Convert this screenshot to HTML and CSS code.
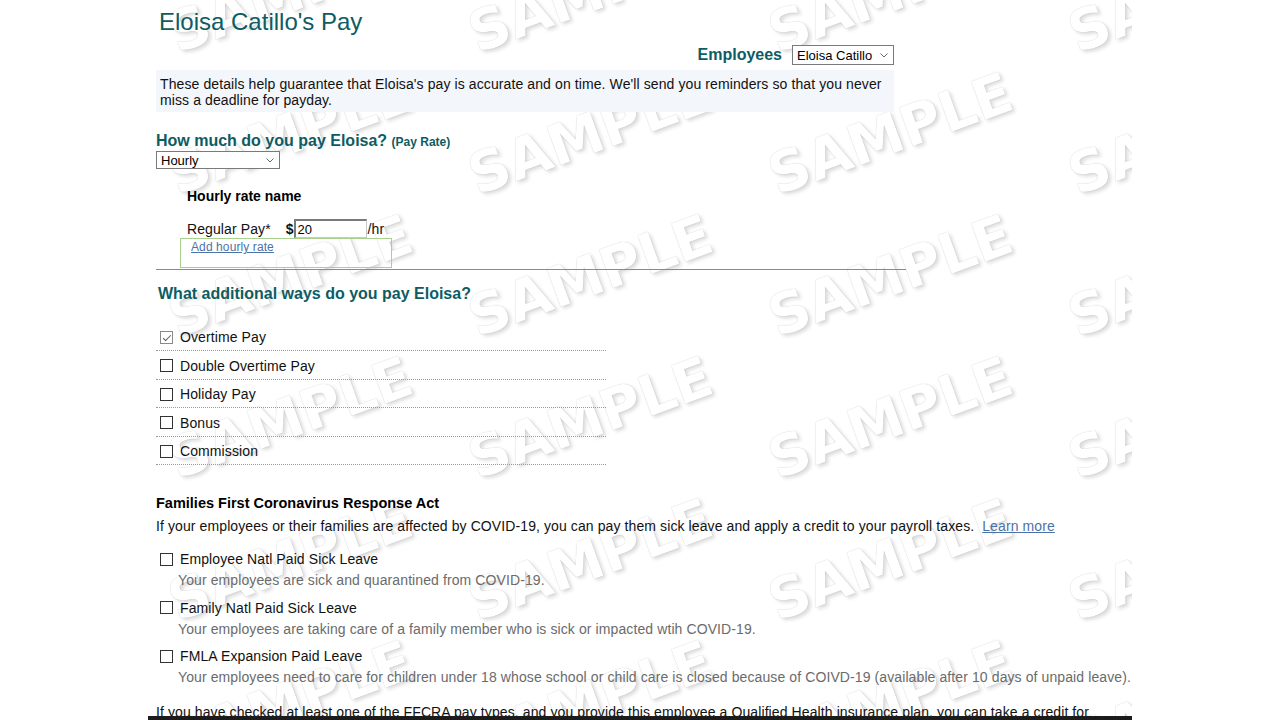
FILE: index.html
```html
<!DOCTYPE html>
<html lang="en">
<head>
    <meta charset="UTF-8">
    <meta name="viewport" content="width=device-width, initial-scale=1.0">
    <title>Eloisa Catillo's Pay</title>
    <link rel="stylesheet" href="styles.css">
</head>
<body>
    <div class="page">
        <!-- sample watermark, sits behind the form -->
        <div class="watermark" aria-hidden="true">
            <span>SAMPLE</span><span>SAMPLE</span><span>SAMPLE</span><span>SAMPLE</span>
            <span>SAMPLE</span><span>SAMPLE</span><span>SAMPLE</span><span>SAMPLE</span>
            <span>SAMPLE</span><span>SAMPLE</span><span>SAMPLE</span><span>SAMPLE</span>
            <span>SAMPLE</span><span>SAMPLE</span><span>SAMPLE</span><span>SAMPLE</span>
            <span>SAMPLE</span><span>SAMPLE</span><span>SAMPLE</span><span>SAMPLE</span>
            <span>SAMPLE</span><span>SAMPLE</span><span>SAMPLE</span><span>SAMPLE</span>
            <span>SAMPLE</span><span>SAMPLE</span><span>SAMPLE</span><span>SAMPLE</span>
        </div>

        <div class="content">
            <h1 class="page-title">Eloisa Catillo's Pay</h1>

            <div class="employee-picker">
                <label for="employee">Employees</label>
                <span class="select-wrap select-employee">
                    <select id="employee">
                        <option>Eloisa Catillo</option>
                    </select>
                    <svg class="chevron" width="8" height="5" viewBox="0 0 8 5"><path d="M0.5 0.5 L4 4 L7.5 0.5" fill="none" stroke="#666" stroke-width="1"/></svg>
                </span>
            </div>

            <p class="intro">These details help guarantee that Eloisa's pay is accurate and on time. We'll send you reminders so that you never miss a deadline for payday.</p>

            <h2 class="section-title">How much do you pay Eloisa? <small>(Pay Rate)</small></h2>
            <span class="select-wrap select-rate">
                <select id="rate-type">
                    <option>Hourly</option>
                    <option>Salary</option>
                </select>
                <svg class="chevron" width="8" height="5" viewBox="0 0 8 5"><path d="M0.5 0.5 L4 4 L7.5 0.5" fill="none" stroke="#666" stroke-width="1"/></svg>
            </span>

            <div class="rate-block">
                <h3>Hourly rate name</h3>
                <div class="rate-row">
                    <label for="regular">Regular Pay*</label>
                    <span class="dollar">$</span>
                    <input type="text" id="regular" value="20">
                    <span class="unit">/hr</span>
                </div>
                <div class="add-rate"><a href="#">Add hourly rate</a></div>
            </div>

            <div class="divider"></div>

            <h2 class="section-title alt">What additional ways do you pay Eloisa?</h2>
            <ul class="pay-types">
                <li><label><input type="checkbox" checked> Overtime Pay</label></li>
                <li><label><input type="checkbox"> Double Overtime Pay</label></li>
                <li><label><input type="checkbox"> Holiday Pay</label></li>
                <li><label><input type="checkbox"> Bonus</label></li>
                <li><label><input type="checkbox"> Commission</label></li>
            </ul>

            <h4 class="ffcra-title">Families First Coronavirus Response Act</h4>
            <p class="ffcra-intro">If your employees or their families are affected by COVID-19, you can pay them sick leave and apply a credit to your payroll taxes.&nbsp; <a href="#">Learn more</a></p>

            <div class="leaves">
                <div class="leave">
                    <label><input type="checkbox"> Employee Natl Paid Sick Leave</label>
                    <p class="leave-desc">Your employees are sick and quarantined from COVID-19.</p>
                </div>
                <div class="leave">
                    <label><input type="checkbox"> Family Natl Paid Sick Leave</label>
                    <p class="leave-desc">Your employees are taking care of a family member who is sick or impacted wtih COVID-19.</p>
                </div>
                <div class="leave">
                    <label><input type="checkbox"> FMLA Expansion Paid Leave</label>
                    <p class="leave-desc">Your employees need to care for children under 18 whose school or child care is closed because of COIVD-19 (available after 10 days of unpaid leave).</p>
                </div>
            </div>

            <p class="ffcra-note">If you have checked at least one of the FFCRA pay types, and you provide this employee a Qualified Health insurance plan, you can take a credit for the cost of the health coverage you pay for during the leave.</p>
        </div>
    </div>
    <div class="bottom-bar"></div>
</body>
</html>
```

FILE: styles.css
```css
body {
    margin: 0;
    font-family: "Liberation Sans", Arial, sans-serif;
    font-size: 14px;
    letter-spacing: 0.1px;
    color: #111;
    background: #fff;
}
.page {
    position: relative;
    width: 984px;
    margin: 0 auto;
    overflow: hidden;
}
.watermark {
    position: absolute;
    top: -80px;
    left: -8px;
    display: grid;
    grid-template-columns: repeat(4, 300px);
    grid-auto-rows: 142px;
    place-items: center;
    z-index: 0;
    pointer-events: none;
}
.watermark span {
    font-family: "DejaVu Sans", sans-serif;
    font-weight: bold;
    font-size: 56px;
    letter-spacing: 0;
    color: #fff;
    white-space: nowrap;
    transform: rotate(-20deg);
    text-shadow: 0 0 1px rgba(0, 0, 0, 0.25), 2px 3px 4px rgba(0, 0, 0, 0.14);
}
.content {
    position: relative;
    z-index: 1;
    padding: 8px 0 40px 8px;
}
.page-title {
    margin: 0;
    padding-left: 3px;
    font-size: 24px;
    line-height: 28px;
    font-weight: normal;
    letter-spacing: 0;
    color: #0d5c63;
}
.employee-picker {
    display: flex;
    justify-content: flex-end;
    align-items: center;
    gap: 10px;
    width: 738px;
    height: 20px;
    margin-top: 9px;
}
.employee-picker label {
    font-size: 16px;
    font-weight: bold;
    line-height: 20px;
    letter-spacing: 0;
    color: #0d5c63;
}
.select-wrap {
    position: relative;
    display: inline-block;
}
.select-wrap select {
    display: block;
    appearance: none;
    -webkit-appearance: none;
    box-sizing: border-box;
    margin: 0;
    padding: 0 18px 0 4px;
    border: 1px solid #7a7a7a;
    border-radius: 0;
    background: #fff;
    font-family: "Liberation Sans", Arial, sans-serif;
    font-size: 13px;
    color: #000;
}
.select-wrap .chevron {
    position: absolute;
    right: 6px;
    top: 50%;
    margin-top: -2px;
    pointer-events: none;
}
.select-employee select {
    width: 102px;
    height: 20px;
}
.select-rate {
    display: block;
    width: 124px;
}
.select-rate select {
    width: 124px;
    height: 18px;
}
.intro {
    width: 738px;
    box-sizing: border-box;
    margin: 5px 0 0;
    padding: 6px 4px 4px;
    background: #f3f6fa;
    line-height: 16px;
    color: #111;
}
.section-title {
    margin: 20px 0 0;
    font-size: 16px;
    line-height: 18px;
    font-weight: bold;
    letter-spacing: 0;
    color: #0d5c63;
}
.section-title small {
    font-size: 12px;
}
.section-title.alt {
    margin-top: 15px;
    padding-left: 2px;
}
.rate-block h3 {
    margin: 19px 0 0;
    padding-left: 31px;
    font-size: 14px;
    line-height: 16px;
    letter-spacing: 0;
    color: #000;
}
.rate-row {
    display: flex;
    align-items: baseline;
    margin-top: 15px;
    padding-left: 31px;
}
.rate-row label {
    margin-right: 15px;
}
.rate-row .dollar {
    font-weight: bold;
}
.rate-row input {
    box-sizing: border-box;
    width: 73px;
    height: 19px;
    margin: 0;
    padding: 0 2px;
    border-top: 2px solid #7a7a7a;
    border-left: 2px solid #7a7a7a;
    border-right: 1px solid #c8c8c8;
    border-bottom: 1px solid #c8c8c8;
    font-family: "Liberation Sans", Arial, sans-serif;
    font-size: 13px;
    color: #000;
}
.rate-row .unit {
    margin-left: 1px;
}
.add-rate {
    box-sizing: border-box;
    width: 212px;
    height: 30px;
    margin-left: 24px;
    padding: 1px 10px;
    border: 1px solid #a9d18e;
    font-size: 12px;
    line-height: 14px;
}
.add-rate a,
.ffcra-intro a {
    color: #4d72a8;
}
.divider {
    width: 750px;
    height: 1px;
    margin-top: 1px;
    background: #6f8fb8;
}
.pay-types {
    list-style: none;
    width: 450px;
    margin: 19.5px 0 0;
    padding: 0;
}
.pay-types li {
    padding: 4.5px 0 3px;
    line-height: 20px;
    border-bottom: 1px dotted #9a9a9a;
}
.pay-types label,
.leave label {
    display: flex;
    align-items: center;
}
input[type="checkbox"] {
    appearance: none;
    -webkit-appearance: none;
    position: relative;
    flex: none;
    width: 13px;
    height: 13px;
    margin: 0 7px 0 4px;
    border: 1px solid #333;
    background: #fff;
}
input[type="checkbox"]:checked {
    border-color: #8a8a8a;
}
input[type="checkbox"]:checked::after {
    content: "";
    position: absolute;
    left: 3.5px;
    top: 1px;
    width: 3px;
    height: 7px;
    border: solid #5a5a5a;
    border-width: 0 1px 1px 0;
    transform: rotate(45deg);
}
.ffcra-title {
    margin: 30px 0 0;
    font-size: 14.5px;
    line-height: 16px;
    font-weight: bold;
    letter-spacing: 0;
    color: #000;
}
.ffcra-intro {
    margin: 7px 0 0;
    line-height: 16px;
}
.leaves {
    margin-top: 15px;
}
.leave {
    margin-bottom: 6.5px;
}
.leave label {
    line-height: 20px;
}
.leave-desc {
    margin: 0 0 0 22px;
    line-height: 22px;
    color: #6b6b6b;
}
.ffcra-note {
    max-width: 940px;
    margin: 16px 0 0;
    line-height: 16px;
}
.bottom-bar {
    position: fixed;
    left: 0;
    right: 0;
    bottom: 0;
    width: 984px;
    height: 4px;
    margin: 0 auto;
    background: #1c1c1c;
    z-index: 5;
}
```
